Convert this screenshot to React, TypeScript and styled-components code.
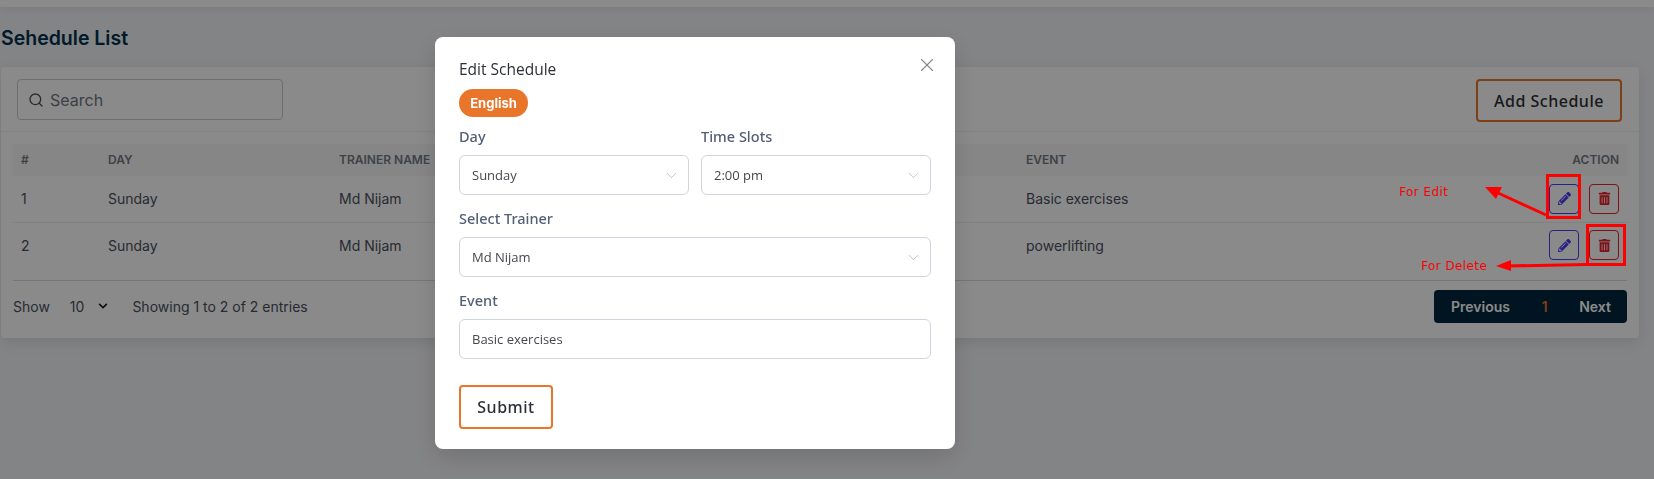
import React from "react";
import styled, { createGlobalStyle } from "styled-components";
import { ChevronDown, Search, X } from "lucide-react";
import { FaChevronDown, FaPencilAlt, FaTrashAlt } from "react-icons/fa";

const GlobalStyle = createGlobalStyle`
  * {
    box-sizing: border-box;
  }
  html,
  body {
    margin: 0;
    height: 100%;
    overflow: hidden;
    background: #f3f4f7;
    font-family: Inter, "Liberation Sans", sans-serif;
  }
`;

const TopBar = styled.div`
  height: 7px;
  background: #fff;
  box-shadow: 0 2px 8px rgba(0, 0, 0, 0.08);
`;
const Page = styled.div`
  padding: 17px 15px 0 1px;
`;
const Title = styled.h1`
  margin: 0 0 15px;
  font-size: 19.5px;
  line-height: 28px;
  font-weight: 600;
  color: #02304d;
`;
const Card = styled.section`
  background: #fff;
  border-radius: 3px;
  box-shadow: 0 4px 14px rgba(0, 0, 0, 0.1);
`;
const Toolbar = styled.div`
  height: 65px;
  padding: 12px 17px 0 16px;
  display: flex;
  justify-content: space-between;
  align-items: flex-start;
  border-bottom: 1px solid #f1f1f3;
`;
const SearchBox = styled.div`
  width: 266px;
  height: 41px;
  padding: 0 10px;
  display: flex;
  align-items: center;
  gap: 6px;
  border: 1px solid #c9cbd1;
  border-radius: 4px;
  font-size: 16px;
  color: #70757f;
  svg {
    color: #4a4f57;
  }
`;
const OutlineButton = styled.button`
  border: 2px solid #e8752a;
  border-radius: 4px;
  background: #fff;
  font-family: "Noto Sans", sans-serif;
  font-weight: 500;
  letter-spacing: 0.5px;
  color: #2c2f36;
`;
const AddButton = styled(OutlineButton)`
  width: 146px;
  height: 43px;
  font-size: 16px;
`;
const TableWrap = styled.div`
  padding: 12px 12px 0;
`;
const Table = styled.table`
  width: 100%;
  table-layout: fixed;
  border-collapse: collapse;
`;
const Th = styled.th<{ $right?: boolean }>`
  height: 32px;
  padding: 0 8px 2px;
  background: #f7f7f8;
  font-size: 12px;
  font-weight: 600;
  text-transform: uppercase;
  color: #747a85;
  text-align: ${(p) => (p.$right ? "right" : "left")};
`;
const Td = styled.td<{ $right?: boolean }>`
  height: 46px;
  padding: 0 8px;
  font-size: 14px;
  color: #4a5060;
  text-align: ${(p) => (p.$right ? "right" : "left")};
`;
const Row = styled.tr`
  border-bottom: 1px solid #eceef1;
  &:last-child {
    border-bottom-color: #d9dbdf;
    td {
      height: 58px;
      padding-bottom: 12px;
    }
  }
`;
const Actions = styled.div`
  display: flex;
  justify-content: flex-end;
  gap: 10px;
`;
const IconButton = styled.button<{ $color: string }>`
  width: 30px;
  height: 30px;
  padding: 0;
  display: flex;
  align-items: center;
  justify-content: center;
  background: transparent;
  border: 1px solid ${(p) => p.$color};
  border-radius: 4px;
  color: ${(p) => p.$color};
  font-size: 13px;
`;
const Footer = styled.div`
  padding: 9px 12px 15px;
  display: flex;
  align-items: center;
  font-size: 14px;
  color: #4a5060;
`;
const PageSize = styled.span`
  margin-left: 20px;
  display: flex;
  align-items: center;
  gap: 14px;
  svg {
    font-size: 10px;
    color: #1c1f24;
  }
`;
const Entries = styled.span`
  margin-left: 24px;
  flex: 1;
`;
const Pagination = styled.div`
  width: 193px;
  height: 33px;
  padding: 0 16px 0 17px;
  display: flex;
  align-items: center;
  justify-content: space-between;
  background: #00263d;
  border-radius: 4px;
  font-weight: 600;
  color: #fff;
`;
const Current = styled.span`
  color: #e8752a;
`;

const Overlay = styled.div`
  position: fixed;
  inset: 0;
  padding: 37px 0 0 435px;
  background: rgba(0, 0, 0, 0.46);
`;
const Modal = styled.form`
  position: relative;
  width: 520px;
  height: 412px;
  padding: 21px 24px 20px;
  background: #fff;
  border-radius: 8px;
  box-shadow: 0 8px 24px rgba(0, 0, 0, 0.15);
`;
const CloseButton = styled.span`
  position: absolute;
  top: 17px;
  right: 17px;
  color: #85888e;
  display: flex;
`;
const ModalTitle = styled.h2`
  margin: 0 0 9px;
  font-family: "Open Sans", sans-serif;
  font-size: 15.5px;
  line-height: 22px;
  font-weight: 500;
  color: #2c2f36;
`;
const LangPill = styled.span`
  display: inline-flex;
  align-items: center;
  justify-content: center;
  width: 69px;
  height: 28px;
  border-radius: 14px;
  background: #e8752a;
  font-size: 13px;
  font-weight: 700;
  color: #fff;
`;
const TwoCols = styled.div`
  margin-top: 9px;
  display: grid;
  grid-template-columns: 1fr 1fr;
  gap: 12px;
`;
const Field = styled.div<{ $gap?: number }>`
  margin-top: ${(p) => p.$gap ?? 0}px;
`;
const Label = styled.label`
  display: block;
  margin-bottom: 9px;
  font-family: "Noto Sans", sans-serif;
  font-size: 14.5px;
  line-height: 20px;
  font-weight: 500;
  color: #545e75;
`;
const Control = styled.div`
  height: 40px;
  padding: 0 8px 0 12px;
  display: flex;
  align-items: center;
  justify-content: space-between;
  border: 1px solid #d3d5de;
  border-radius: 6px;
  font-family: "Open Sans", sans-serif;
  font-size: 13px;
  color: #44474d;
  svg {
    color: #a8abb2;
  }
`;
const SubmitButton = styled(OutlineButton)`
  display: block;
  margin-top: 26px;
  width: 94px;
  height: 44px;
  font-size: 16px;
`;

const Annotations = styled.svg`
  position: fixed;
  inset: 0;
`;
const Note = styled.text`
  font-family: "DejaVu Sans", sans-serif;
  font-size: 12px;
  letter-spacing: 0.4px;
  fill: #ff0000;
`;

const rows = [
  { id: 1, event: "Basic exercises" },
  { id: 2, event: "powerlifting" },
];

const Select = ({ value }: { value: string }) => (
  <Control>
    {value}
    <ChevronDown size={17} strokeWidth={1} />
  </Control>
);

export default function App() {
  return (
    <>
      <GlobalStyle />
      <TopBar />
      <Page>
        <Title>Sehedule List</Title>
        <Card>
          <Toolbar>
            <SearchBox>
              <Search size={16} />
              Search
            </SearchBox>
            <AddButton type="button">Add Schedule</AddButton>
          </Toolbar>
          <TableWrap>
            <Table>
              <colgroup>
                <col width={87} />
                <col width={231} />
                <col width={349} />
                <col width={338} />
                <col />
                <col width={200} />
              </colgroup>
              <thead>
                <tr>
                  <Th>#</Th>
                  <Th>Day</Th>
                  <Th>Trainer Name</Th>
                  <Th />
                  <Th>Event</Th>
                  <Th $right>Action</Th>
                </tr>
              </thead>
              <tbody>
                {rows.map((row) => (
                  <Row key={row.id}>
                    <Td>{row.id}</Td>
                    <Td>Sunday</Td>
                    <Td>Md Nijam</Td>
                    <Td />
                    <Td>{row.event}</Td>
                    <Td $right>
                      <Actions>
                        <IconButton type="button" $color="#4a3df0">
                          <FaPencilAlt />
                        </IconButton>
                        <IconButton type="button" $color="#e8222c">
                          <FaTrashAlt />
                        </IconButton>
                      </Actions>
                    </Td>
                  </Row>
                ))}
              </tbody>
            </Table>
          </TableWrap>
          <Footer>
            <span>Show</span>
            <PageSize>
              10
              <FaChevronDown />
            </PageSize>
            <Entries>Showing 1 to 2 of 2 entries</Entries>
            <Pagination>
              <span>Previous</span>
              <Current>1</Current>
              <span>Next</span>
            </Pagination>
          </Footer>
        </Card>
      </Page>

      <Overlay>
        <Modal>
          <CloseButton>
            <X size={22} strokeWidth={1.2} />
          </CloseButton>
          <ModalTitle>Edit Schedule</ModalTitle>
          <LangPill>English</LangPill>
          <TwoCols>
            <Field>
              <Label>Day</Label>
              <Select value="Sunday" />
            </Field>
            <Field>
              <Label>Time Slots</Label>
              <Select value="2:00 pm" />
            </Field>
          </TwoCols>
          <Field $gap={13}>
            <Label>Select Trainer</Label>
            <Select value="Md Nijam" />
          </Field>
          <Field $gap={13}>
            <Label>Event</Label>
            <Control>Basic exercises</Control>
          </Field>
          <SubmitButton type="button">Submit</SubmitButton>
        </Modal>
      </Overlay>

      {/* red notes drawn over the screenshot */}
      <Annotations width={1654} height={479} viewBox="0 0 1654 479">
        <rect x={1547.5} y={175.5} width={32} height={42} fill="none" stroke="#f00" strokeWidth={3} />
        <rect x={1587.5} y={225.5} width={37} height={39} fill="none" stroke="#f00" strokeWidth={3} />
        <line x1={1546} y1={215} x2={1496} y2={192} stroke="#f00" strokeWidth={3} />
        <polygon points="1485,187 1502,187 1496,199" fill="#f00" />
        <line x1={1586} y1={264.5} x2={1506} y2={266} stroke="#f00" strokeWidth={3} />
        <polygon points="1496,266 1511,260 1511,271" fill="#f00" />
        <Note x={1399} y={196}>For Edit</Note>
        <Note x={1421} y={270}>For Delete</Note>
      </Annotations>
    </>
  );
}
